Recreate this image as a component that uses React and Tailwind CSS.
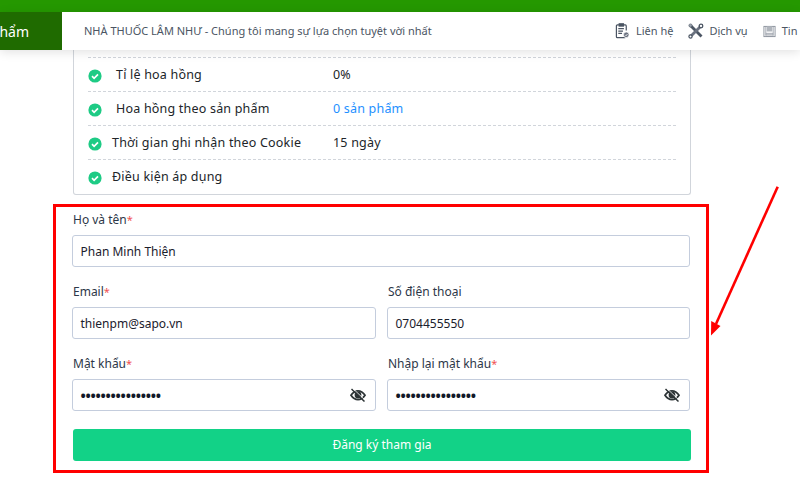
import React from 'react';

const rows = [
  { label: 'Tỉ lệ hoa hồng', value: '0%', indent: true },
  { label: 'Hoa hồng theo sản phẩm', value: '0 sản phẩm', indent: true, link: true },
  { label: 'Thời gian ghi nhận theo Cookie', value: '15 ngày' },
  { label: 'Điều kiện áp dụng', value: '' },
];

const CheckIcon = () => (
  <svg viewBox="0 0 14 14" className="w-[14px] h-[14px] shrink-0">
    <circle cx="7" cy="7" r="6.6" fill="#1ecb85" />
    <path d="M4 7.2l2.1 2.1L10 5.3" fill="none" stroke="#fff" strokeWidth="1.7" />
  </svg>
);

const ContactIcon = () => (
  <svg viewBox="0 0 16 18" className="w-[15px] h-[17px]" fill="none" stroke="#4b5563" strokeWidth="1.3">
    <path d="M11 15.5H2.5a1 1 0 0 1-1-1V3a1 1 0 0 1 1-1H11a1 1 0 0 1 1 1v5" />
    <rect x="4.5" y="0.8" width="4.5" height="2.4" fill="#4b5563" />
    <path d="M3.5 6h6M3.5 8.5h5M3.5 11h4" />
    <circle cx="12" cy="12.5" r="3" fill="#6b7280" stroke="#fff" strokeWidth="0.8" />
    <path d="M10.8 12.5l1 1 1.5-1.8" stroke="#fff" strokeWidth="0.9" />
  </svg>
);

const ToolsIcon = () => (
  <svg viewBox="0 0 16 16" className="w-[16px] h-[16px]" fill="none" stroke="#4b5563">
    <path d="M2.5 2.5l11 11" strokeWidth="2.8" />
    <path d="M12.5 3.5L2.5 13.5" strokeWidth="2.8" stroke="#6b7280" />
    <circle cx="13" cy="3" r="1.8" fill="#fff" strokeWidth="1.3" />
    <circle cx="2.5" cy="13.5" r="1.6" fill="#fff" strokeWidth="1.2" />
    <circle cx="2.5" cy="2.5" r="1.6" fill="#9ca3af" strokeWidth="0.6" />
  </svg>
);

const NewsIcon = () => (
  <svg viewBox="0 0 14 14" className="w-[13px] h-[13px]" fill="none" stroke="#8b929c">
    <rect x="1" y="1.5" width="12" height="11" />
    <rect x="4" y="1.5" width="6" height="5.5" fill="#b0b5bc" stroke="none" />
    <path d="M3 9h8M3 10.5h8M3 12h8" strokeWidth="0.8" />
    <path d="M3 1.5v10M11 1.5v10" strokeWidth="0.8" />
  </svg>
);

const EyeOffIcon = () => (
  <svg viewBox="0 0 16 14" className="absolute right-[9px] top-[8px] w-[16px] h-[14px]" fill="none" stroke="#2d3436">
    <path d="M1 7.2C3 4.2 5.2 2.8 8 2.8s5 1.4 7 4.4c-2 3-4.2 4.4-7 4.4S3 10.2 1 7.2Z" strokeWidth="1.8" />
    <circle cx="8" cy="7" r="3.4" fill="#2d3436" stroke="none" />
    <path d="M1.5 1L14.500 13.500" strokeWidth="1.5" />
    <path d="M3 0.600L15.500 12.500" stroke="#fff" strokeWidth="0.8" />
  </svg>
);

const Field = ({ label, required, value, password }) => (
  <div>
    <div className="ml-[1px] text-[12px] leading-[18px] text-[#2d3748]">
      {label}
      {required && <span className="text-[#f05252] text-[11px]">*</span>}
    </div>
    <div className="relative mt-[6px] h-[32px] rounded-[3px] border border-[#c4cddd] bg-white flex items-center pl-[7.5px] pt-[1px] text-[12px] text-[#1a202c]">
      {password ? <span className="text-[#111827] text-[14px] font-bold tracking-[-0.25px] leading-none">{'•'.repeat(16)}</span> : value}
      {password && <EyeOffIcon />}
    </div>
  </div>
);

export default function App() {
  return (
    <div className="relative w-[800px] h-[500px] overflow-hidden bg-white font-['Noto_Sans','Open_Sans',sans-serif]">
      <div className="h-[12px] bg-[#259800]" />
      <header className="relative z-10 h-[38px] flex items-center bg-white shadow-[0_2px_10px_rgba(0,0,0,0.12)]">
        <div className="w-[62px] h-full bg-[#1f6b00] text-white text-[14px] flex items-center justify-end pr-[33px] whitespace-nowrap">phẩm</div>
        <div className="ml-[22px] text-[11px] text-[#4b5563] whitespace-nowrap">NHÀ THUỐC LÂM NHƯ - Chúng tôi mang sự lựa chọn tuyệt vời nhất</div>
        <nav className="ml-auto flex items-center text-[11px] text-[#4b5563] whitespace-nowrap w-[185px] shrink-0">
          <span className="flex items-center gap-[6px]"><ContactIcon />Liên hệ</span>
          <span className="flex items-center gap-[5px] ml-[15px]"><ToolsIcon />Dịch vụ</span>
          <span className="flex items-center gap-[6px] ml-[15px]"><NewsIcon />Tin</span>
        </nav>
      </header>

      <main className="w-[656px] ml-[53px]">
        <section className="ml-[20px] w-[618px] h-[145px] border border-t-0 border-[#d1d5db] rounded-b-[3px] px-[14px] pt-[7px]">
          {rows.map((row) => (
            <div key={row.label} className="h-[34px] pt-[2px] border-t border-dashed border-[#d1d5db] flex items-center text-[12.5px] text-[#212529] tracking-[0.2px]">
              <CheckIcon />
              <span className={`${row.indent ? 'ml-[14px] w-[217px]' : 'ml-[10px] w-[221px]'}`}>{row.label}</span>
              {row.value && <span className={row.link ? 'text-[#1e90ff]' : ''}>{row.value}</span>}
            </div>
          ))}
        </section>

        <form className="mt-[9px] h-[269px] border-[3px] border-[#ff0000] pl-[16px] pr-[16px] pt-[4px]">
          <Field label="Họ và tên" required value="Phan Minh Thiện" />
          <div className="grid grid-cols-[304px_1fr] gap-x-[11px] mt-[16px]">
            <Field label="Email" required value="thienpm@sapo.vn" />
            <Field label="Số điện thoại" value="0704455550" />
          </div>
          <div className="grid grid-cols-[304px_1fr] gap-x-[11px] mt-[16px]">
            <Field label="Mật khẩu" required password />
            <Field label="Nhập lại mật khẩu" required password />
          </div>
          <button type="button" className="block mt-[18px] ml-[1px] w-[618px] h-[32px] rounded-[3px] bg-[#12d287] text-white text-[12px]">Đăng ký tham gia</button>
        </form>
      </main>

      <svg className="absolute left-[705px] top-[180px] w-[80px] h-[160px]" viewBox="0 0 80 160">
        <path d="M72.7 6.7L11 144" stroke="#ff0000" strokeWidth="2.6" fill="none" />
        <path d="M6 155.5L6.2 141L15.5 146Z" fill="#ff0000" />
      </svg>
    </div>
  );
}
